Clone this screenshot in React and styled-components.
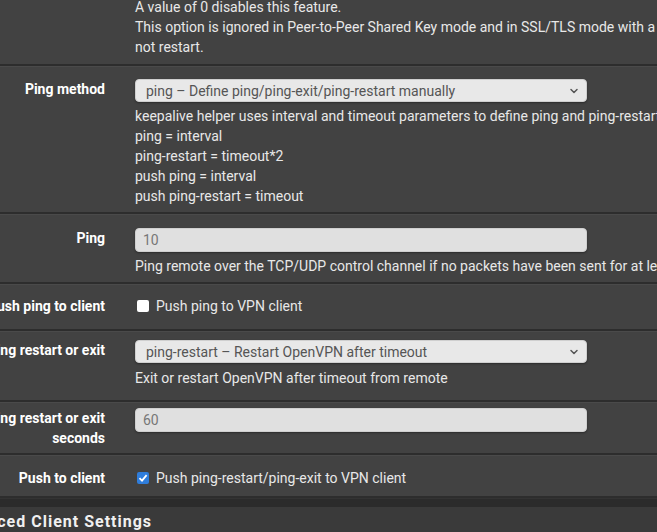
import styled, { createGlobalStyle } from 'styled-components';
import { ChevronDown } from 'lucide-react';

const GlobalStyle = createGlobalStyle`
  html, body {
    margin: 0;
    padding: 0;
    background: #424242;
    overflow: hidden;
  }
  body {
    font-family: Roboto, "Liberation Sans", sans-serif;
    font-size: 14px;
    color: #e8e8e8;
  }
`;

const Page = styled.div`
  width: 657px;
  height: 532px;
  overflow: hidden;
  background: #424242;
`;

const Panel = styled.div`
  margin-left: -80px;
  margin-top: -3px;
  width: 900px;
`;

const Row = styled.div`
  display: grid;
  grid-template-columns: 200px 1fr;
  padding: ${(p) => p.$pad || '14px 0 6px'};
  border-bottom: 2px solid #2d2d2d;
  box-shadow: inset 0 1px 0 #4a4a4a;
  ${(p) => p.$first && 'box-shadow: none;'}
`;

const Label = styled.div`
  padding: 0 15px 0 55px;
  text-align: right;
  font-weight: 700;
  color: #fff;
  line-height: 20px;
`;

const Control = styled.div`
  padding-left: 15px;
  display: flex;
  flex-direction: column;
  align-items: flex-start;
`;

const Help = styled.div`
  line-height: 20px;
  color: #e8e8e8;
  white-space: nowrap;
  margin-top: ${(p) => p.$mt || '0'};
`;

const SelectWrap = styled.div`
  position: relative;
  width: 452px;
`;

const Select = styled.select`
  appearance: none;
  width: 100%;
  height: 23px;
  padding: 0 30px 0 10px;
  border: 1px solid #cfcfcf;
  border-radius: 4px;
  background: #e8e8e8;
  color: #555;
  font-family: Roboto, "Liberation Sans", sans-serif;
  font-size: 14px;
  outline: none;
  box-shadow: 0 1px 2px rgba(0, 0, 0, 0.35);
`;

const Caret = styled(ChevronDown)`
  position: absolute;
  right: 7px;
  top: 6px;
  pointer-events: none;
  color: #555;
`;

const Input = styled.input`
  width: 452px;
  height: 24px;
  box-sizing: border-box;
  padding: 0 7px;
  border: 1px solid #cfcfcf;
  border-radius: 4px;
  background: #e0e0e0;
  color: #777;
  font-family: Roboto, "Liberation Sans", sans-serif;
  font-size: 14px;
  outline: none;
  box-shadow: 0 1px 2px rgba(0, 0, 0, 0.35);
`;

const CheckLabel = styled.label`
  display: flex;
  align-items: center;
  gap: 7px;
  line-height: 20px;
  color: #e8e8e8;
  white-space: nowrap;
  padding-left: 2px;
`;

const Box = styled.span`
  width: 12px;
  height: 12px;
  border-radius: 2px;
  background: ${(p) => (p.$checked ? '#2f7ddb' : '#fff')};
  display: inline-flex;
  align-items: center;
  justify-content: center;
`;

const Band = styled.div`
  height: 8px;
  background: #2b2b2b;
  border-top: 1px solid #333;
`;

const Heading = styled.h2`
  margin: 0;
  padding: 5px 0 0 42px;
  height: 26px;
  margin-left: 80px;
  background: #3a3a3a;
  color: #f0f0f0;
  font-size: 16px;
  font-weight: 700;
  letter-spacing: 1px;
  white-space: nowrap;
  text-indent: -95px;
`;

function Check({ checked }) {
  return (
    <Box $checked={checked}>
      {checked && (
        <svg width="10" height="10" viewBox="0 0 10 10">
          <path d="M1.5 5.2 L4 7.6 L8.6 2.2" fill="none" stroke="#fff" strokeWidth="1.8" />
        </svg>
      )}
    </Box>
  );
}

function SelectBox({ value }) {
  return (
    <SelectWrap>
      <Select defaultValue={value}>
        <option>{value}</option>
      </Select>
      <Caret size={12} strokeWidth={3} />
    </SelectWrap>
  );
}

export default function App() {
  return (
    <Page>
      <GlobalStyle />
      <Panel>
        <Row $first $pad="0 0 7px">
          <Label />
          <Control>
            <Help>A value of 0 disables this feature.</Help>
            <Help>
              This option is ignored in Peer-to-Peer Shared Key mode and in SSL/TLS mode with a blank or unset Server Certificate, the server will
            </Help>
            <Help>not restart.</Help>
          </Control>
        </Row>
        <Row $pad="13px 0 6px">
          <Label>Ping method</Label>
          <Control>
            <SelectBox value="ping – Define ping/ping-exit/ping-restart manually" />
            <Help $mt="4px">
              keepalive helper uses interval and timeout parameters to define ping and ping-restart values as follows:
            </Help>
            <Help>ping = interval</Help>
            <Help>ping-restart = timeout*2</Help>
            <Help>push ping = interval</Help>
            <Help>push ping-restart = timeout</Help>
          </Control>
        </Row>
        <Row>
          <Label>Ping</Label>
          <Control>
            <Input defaultValue="10" />
            <Help $mt="4px">
              Ping remote over the TCP/UDP control channel if no packets have been sent for at least n seconds.
            </Help>
          </Control>
        </Row>
        <Row $pad="12px 0 13px">
          <Label>Push ping to client</Label>
          <Control>
            <CheckLabel>
              <Check />
              Push ping to VPN client
            </CheckLabel>
          </Control>
        </Row>
        <Row $pad="9px 0 12px">
          <Label>Ping restart or exit</Label>
          <Control>
            <SelectBox value="ping-restart – Restart OpenVPN after timeout" />
            <Help $mt="5px">Exit or restart OpenVPN after timeout from remote</Help>
          </Control>
        </Row>
        <Row $pad="6px 0 5px">
          <Label>Ping restart or exit seconds</Label>
          <Control>
            <Input defaultValue="60" />
          </Control>
        </Row>
        <Row $pad="13px 0 8px">
          <Label>Push to client</Label>
          <Control>
            <CheckLabel>
              <Check checked />
              Push ping-restart/ping-exit to VPN client
            </CheckLabel>
          </Control>
        </Row>
        <Band />
        <Heading>Advanced Client Settings</Heading>
      </Panel>
    </Page>
  );
}
